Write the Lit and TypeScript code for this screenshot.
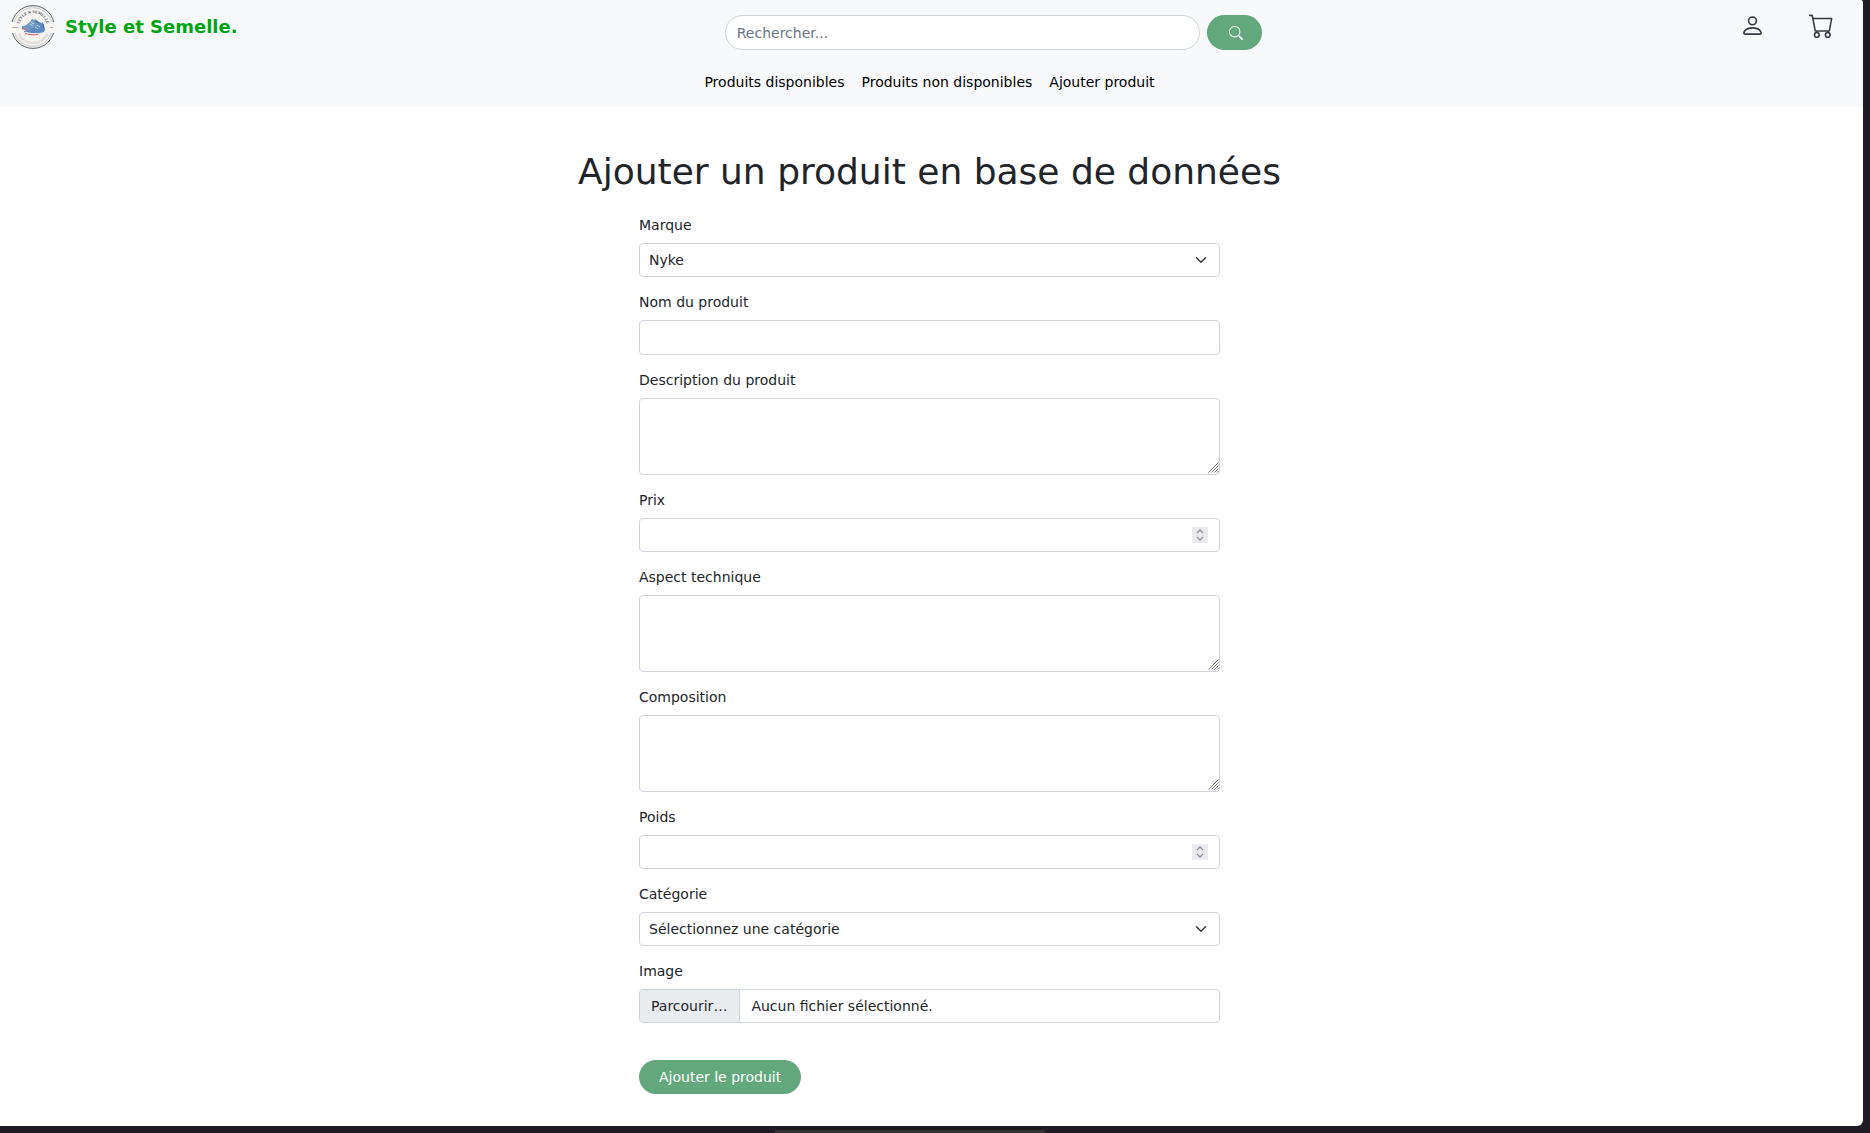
import { LitElement, html, css, svg } from "lit";
import { customElement, property } from "lit/decorators.js";

interface Field {
  id: string;
  label: string;
  kind: "select" | "text" | "textarea" | "number" | "file";
  options?: string[];
}

const FIELDS: Field[] = [
  { id: "marque", label: "Marque", kind: "select", options: ["Nyke"] },
  { id: "nom", label: "Nom du produit", kind: "text" },
  { id: "description", label: "Description du produit", kind: "textarea" },
  { id: "prix", label: "Prix", kind: "number" },
  { id: "aspect", label: "Aspect technique", kind: "textarea" },
  { id: "composition", label: "Composition", kind: "textarea" },
  { id: "poids", label: "Poids", kind: "number" },
  { id: "categorie", label: "Catégorie", kind: "select", options: ["Sélectionnez une catégorie"] },
  { id: "image", label: "Image", kind: "file" },
];

const ICONS = {
  search: svg`<path d="M11.742 10.344a6.5 6.5 0 1 0-1.397 1.398h-.001q.044.06.098.115l3.85 3.85a1 1 0 0 0 1.415-1.414l-3.85-3.85a1 1 0 0 0-.115-.1zM12 6.5a5.5 5.5 0 1 1-11 0 5.5 5.5 0 0 1 11 0"/>`,
  person: svg`<path d="M8 8a3 3 0 1 0 0-6 3 3 0 0 0 0 6m2-3a2 2 0 1 1-4 0 2 2 0 0 1 4 0m4 8c0 1-1 1-1 1H3s-1 0-1-1 1-4 6-4 6 3 6 4m-1-.004c-.001-.246-.154-.986-.832-1.664C11.516 10.68 10.289 10 8 10s-3.516.68-4.168 1.332c-.678.678-.83 1.418-.832 1.664z"/>`,
  cart: svg`<path d="M0 1.5A.5.5 0 0 1 .5 1H2a.5.5 0 0 1 .485.379L2.89 3H14.5a.5.5 0 0 1 .491.592l-1.5 8A.5.5 0 0 1 13 12H4a.5.5 0 0 1-.491-.408L2.01 3.607 1.61 2H.5a.5.5 0 0 1-.5-.5M3.102 4l1.313 7h8.17l1.313-7zM5 12a2 2 0 1 0 0 4 2 2 0 0 0 0-4m7 0a2 2 0 1 0 0 4 2 2 0 0 0 0-4m-7 1a1 1 0 1 1 0 2 1 1 0 0 1 0-2m7 0a1 1 0 1 1 0 2 1 1 0 0 1 0-2"/>`,
};

@customElement("shop-logo")
class ShopLogo extends LitElement {
  static styles = css`
    :host { display: block; }
    .logo { display: block; width: 46px; height: 46px; }
    .name { font: 700 4px "Liberation Serif", serif; fill: #4a4d54; }
    .motto { font: 3px "Liberation Sans", sans-serif; fill: #a5a39e; }
  `;
  render() {
    return html`
      <svg class="logo" viewBox="0 0 46 46" aria-hidden="true">
        <defs>
          <path id="top" d="M9 23a14 14 0 0 1 28 0" />
          <path id="bottom" d="M6 23a17 17 0 0 0 34 0" />
        </defs>
        <circle cx="23" cy="23" r="22" fill="#f5f4f1" />
        <circle cx="23" cy="23" r="21.400" fill="none" stroke="#5d606a" stroke-width="1" />
        <circle cx="23" cy="23" r="19.300" fill="none" stroke="#a9abb0" stroke-width=".6" />
        <rect x="0" y="18" width="6" height="11" fill="#f9f7f2" />
        <rect x="40" y="18" width="6" height="11" fill="#f9f7f2" />
        <path d="M2 23.500h6M40 23.500h3" stroke="#b5b3ae" stroke-width="1" />
        <text class="name" text-anchor="middle"><textPath href="#top" startOffset="50%">STYLE &amp; SEMELLE</textPath></text>
        <text class="motto" text-anchor="middle"><textPath href="#bottom" startOffset="50%">POUR VOS CHAUSSURES</textPath></text>
        <path d="M12 22c3 0 6-2 8-4 1-1 1-2 2-3l2 1 2-1c1 2 3 3 5 4l1 3-6 5c-6 1-11 0-14-2z" fill="#7099c4" />
        <path d="M12 24c4 2 8 3 13 3" fill="none" stroke="#dd6a72" stroke-width="1" />
        <path d="M14 27c4 0 8-2 11-4 2-1 3-3 4-5l2 1 2-1c0 2 1 5 2 7 0 2-1 3-3 4-6 1-13 1-18-1z" fill="#5b8bc0" />
        <path d="M21 18l3 2M20 20l3 2M27 21l3 2M25 23l3 2" stroke="#dce7f1" stroke-width=".8" />
        <path d="M25 17l4 2M33 20l1 4" stroke="#345f91" stroke-width="1" />
        <path d="M15 28c5 2 12 2 18 1" fill="none" stroke="#f0efed" stroke-width="1" />
        <path d="M15 29.500c5 1.500 10 1.500 13 1" fill="none" stroke="#e0525e" stroke-width="1" />
      </svg>
    `;
  }
}

@customElement("shop-header")
class ShopHeader extends LitElement {
  static styles = css`
    :host { display: block; background: #f8f9fb; height: 107px; }
    .bar { display: flex; justify-content: space-between; align-items: flex-start; padding: 4px 29px 0 10px; }
    .brand { display: flex; align-items: center; gap: 9px; padding-right: 9px; color: #00a513; font-size: 18px; font-weight: 700; line-height: 22px; text-decoration: none; }
    .search { display: flex; gap: 7px; padding-top: 11px; flex: 0 1 537px; }
    .query { flex: 1; min-width: 0; box-sizing: border-box; height: 35px; padding: 0 11px; border: 1px solid #ced4da; border-radius: 18px; background: #fff; color: #212529; font: inherit; outline: none; }
    .query::placeholder { color: #6c757d; opacity: 1; }
    .go { display: flex; align-items: center; justify-content: center; box-sizing: border-box; width: 55px; height: 35px; padding: 0 0 0 4px; border: 0; border-radius: 18px; background: #63a87d; color: #fff; }
    .actions { display: flex; gap: 44px; padding-top: 9px; }
    .action { display: block; color: #343a40; }
    .icon { display: block; width: 25px; height: 25px; fill: currentColor; }
    .small { width: 14px; height: 14px; }
    .links { display: flex; justify-content: center; gap: 17px; padding: 21px 4px 0 0; }
    .link { color: #000; text-decoration: none; line-height: 22px; }
  `;
  render() {
    return html`
      <header>
        <div class="bar">
          <a class="brand" href="#"><shop-logo></shop-logo><span>Style et Semelle.</span></a>
          <form class="search" role="search">
            <input class="query" type="search" placeholder="Rechercher..." aria-label="Rechercher" />
            <button class="go" type="button" aria-label="Rechercher">
              <svg class="icon small" viewBox="0 0 16 16">${ICONS.search}</svg>
            </button>
          </form>
          <div class="actions">
            <a class="action" href="#" aria-label="Compte"><svg class="icon" viewBox="0 0 16 16">${ICONS.person}</svg></a>
            <a class="action" href="#" aria-label="Panier"><svg class="icon" viewBox="0 0 16 16">${ICONS.cart}</svg></a>
          </div>
        </div>
        <nav class="links">
          <a class="link" href="#">Produits disponibles</a>
          <a class="link" href="#">Produits non disponibles</a>
          <a class="link" href="#">Ajouter produit</a>
        </nav>
      </header>
    `;
  }
}

@customElement("form-field")
class FormField extends LitElement {
  @property({ attribute: false }) field!: Field;

  static styles = css`
    :host { display: block; }
    .label { display: block; margin-bottom: 7px; line-height: 22px; }
    .wrap { position: relative; display: block; }
    .control { display: block; box-sizing: border-box; width: 100%; height: 34px; margin: 0; padding: 0 11px; border: 1px solid #ced4da; border-radius: 4px; background: #fff; color: #212529; font: inherit; outline: none; appearance: none; }
    .select { padding: 0 32px 0 9px; }
    .text { height: 35px; }
    .area { height: 77px; padding: 5px 11px; resize: vertical; }
    .area::-webkit-resizer { background: transparent; }
    .number { appearance: textfield; }
    .number::-webkit-inner-spin-button { appearance: none; margin: 0; }
    .mark { position: absolute; pointer-events: none; fill: none; }
    .chevron { right: 13px; top: 11px; width: 12px; height: 12px; stroke: #343a40; stroke-width: 2; stroke-linecap: round; stroke-linejoin: round; }
    .spinner { right: 12px; top: 9px; width: 16px; height: 16px; background: #e9e9ee; stroke: #8f8f9d; stroke-width: 1.300; }
    .grip { right: 1px; bottom: 2px; width: 11px; height: 11px; stroke: #6f6f6f; stroke-width: 1; }
    .file { display: flex; box-sizing: border-box; height: 34px; border: 1px solid #ced4da; border-radius: 4px; background: #fff; overflow: hidden; line-height: 32px; }
    .browse { padding: 0 12px 0 11px; background: #e9ecef; border-right: 1px solid #ced4da; }
    .chosen { padding: 0 11px; }
    .picker { position: absolute; inset: 0; width: 100%; height: 100%; opacity: 0; }
  `;

  private control() {
    const { id, kind, options } = this.field;
    switch (kind) {
      case "select":
        return html`
          <select class="control select" id=${id}>${options?.map((o) => html`<option>${o}</option>`)}</select>
          <svg class="mark chevron" viewBox="0 0 16 16"><path d="m2 5 6 6 6-6" /></svg>`;
      case "textarea":
        return html`
          <textarea class="control area" id=${id}></textarea>
          <svg class="mark grip" viewBox="0 0 11 11"><path d="M.5 10.500l10-10M3.500 10.500l7-7M6.500 10.500l4-4M9 10.500l1.500-1.500" /></svg>`;
      case "number":
        return html`
          <input class="control number" id=${id} type="number" />
          <svg class="mark spinner" viewBox="0 0 16 16"><path d="m5 6 3-3 3 3M5 10l3 3 3-3" /></svg>`;
      case "file":
        return html`
          <span class="file"><span class="browse">Parcourir…</span><span class="chosen">Aucun fichier sélectionné.</span></span>
          <input class="picker" id=${id} type="file" />`;
      default:
        return html`<input class="control text" id=${id} type="text" />`;
    }
  }

  render() {
    return html`<label class="label" for=${this.field.id}>${this.field.label}</label><div class="wrap">${this.control()}</div>`;
  }
}

@customElement("app-root")
class AppRoot extends LitElement {
  static styles = css`
    :host { display: flex; flex-direction: column; min-height: 100vh; background: #1e1b24; color: #212529; font-family: "DejaVu Sans", sans-serif; font-size: 14px; line-height: 22px; }
    .page { flex: 1; margin-right: 7px; border-radius: 0 3px 6px 0; background: #fff; overflow: hidden; }
    .main { padding: 43px 4px 32px 0; }
    .title { margin: 0 0 21px; font-size: 36px; font-weight: 400; line-height: 43px; text-align: center; }
    .form { display: flex; flex-direction: column; gap: 14px; width: 100%; max-width: 581px; margin: 0 auto; }
    .submit { align-self: flex-start; height: 34px; margin-top: 23px; padding: 0 20px; border: 0; border-radius: 17px; background: #63a87d; color: #fff; font: inherit; }
    .edge { display: flex; align-items: flex-end; justify-content: center; height: 7px; padding-right: 50px; }
    .handle { width: 270px; height: 3px; background: #333; }
  `;
  render() {
    return html`
      <div class="page">
        <shop-header></shop-header>
        <main class="main">
          <h1 class="title">Ajouter un produit en base de données</h1>
          <form class="form">
            ${FIELDS.map((f) => html`<form-field .field=${f}></form-field>`)}
            <button class="submit" type="button">Ajouter le produit</button>
          </form>
        </main>
      </div>
      <div class="edge"><div class="handle"></div></div>
    `;
  }
}
